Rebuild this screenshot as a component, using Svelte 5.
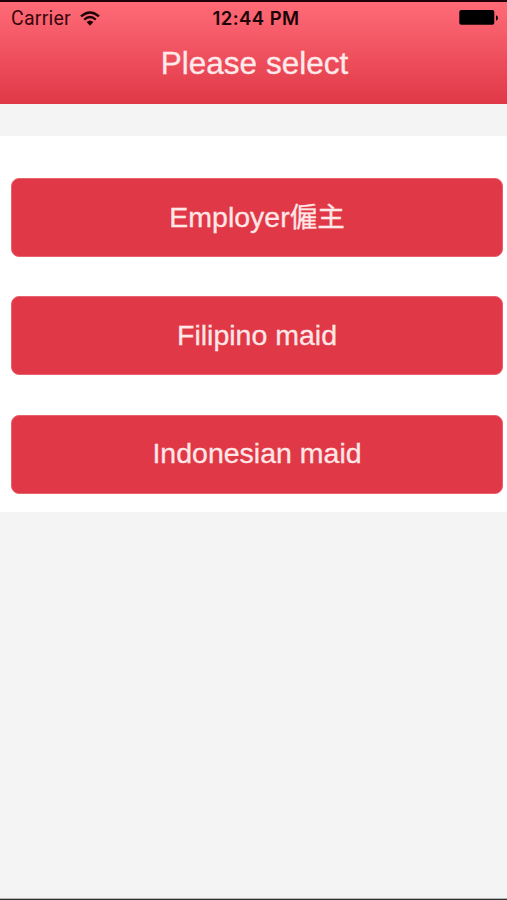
<script>
    let time = "12:44 PM";

    const roles = [
        { id: "employer", name: "Employer", native: "僱主" },
        { id: "filipino", name: "Filipino maid" },
        { id: "indonesian", name: "Indonesian maid" },
    ];
</script>

<div class="screen">
    <header class="header">
        <div class="status-bar">
            <div class="carrier">
                <span class="carrier-name">Carrier</span>
                <svg class="wifi" viewBox="0 0 20 15" width="20" height="15">
                    <path d="M1 5.4 Q10 -2.6 19 5.4" />
                    <path d="M4.2 8.6 Q10 3.4 15.8 8.6" />
                    <path class="dot" d="M6.6 11 Q10 8 13.4 11 L10 14.7 Z" />
                </svg>
            </div>
            <span class="time">{time}</span>
            <svg class="battery" viewBox="0 0 40 16" width="40" height="16">
                <rect x="0.3" y="0" width="35" height="14.8" rx="2" />
                <path d="M37 5.2 Q39 6 39 8 Q39 10 37 10.8 Z" />
            </svg>
        </div>
        <h1 class="title">Please select</h1>
    </header>

    <main class="roles">
        {#each roles as role (role.id)}
            <button class="role-button" type="button">
                {role.name}{#if role.native}<span class="native" lang="zh-Hant">{role.native}</span>{/if}
            </button>
        {/each}
    </main>
</div>

<style>
    :global(body) {
        margin: 0;
        background-color: #f4f4f4;
    }

    .screen {
        box-sizing: border-box;
        height: 900px;
        border-top: 2px solid #210009;
        border-bottom: 1px solid #303033;
        background-color: #f4f4f4;
        font-family: "Liberation Sans", "Noto Sans CJK TC", sans-serif;
        box-shadow: inset 0 -1px #b5b5b5;
        overflow: hidden;
    }

    .header {
        box-sizing: border-box;
        height: 102px;
        background: linear-gradient(#ff6b77, #e03847);
    }

    .status-bar {
        display: grid;
        grid-template-columns: 1fr auto 1fr;
        align-items: center;
        height: 32px;
        padding: 0 8px 0 11px;
    }

    .carrier {
        display: flex;
        align-items: center;
        gap: 9px;
        color: #38060c;
    }

    .carrier-name {
        font-family: Roboto, sans-serif;
        font-size: 19.5px;
        letter-spacing: 0.25px;
    }

    .wifi {
        fill: none;
        stroke: #210307;
        stroke-width: 2.4;
    }

    .wifi .dot {
        fill: #210307;
        stroke: none;
    }

    .time {
        padding-left: 2px;
        color: #1c0306;
        font-family: Inter, sans-serif;
        font-size: 18.5px;
        font-weight: 600;
        letter-spacing: 0.45px;
    }

    .battery {
        justify-self: end;
        fill: #000;
    }

    .title {
        margin: 9px 0 0;
        padding-left: 2px;
        color: #ffe9ea;
        font-size: 31.5px;
        font-weight: 400;
        line-height: 40px;
        text-align: center;
        -webkit-text-stroke: 0.3px #ffe9ea;
    }

    .roles {
        box-sizing: border-box;
        display: flex;
        flex-direction: column;
        gap: 39.4px;
        height: 376px;
        margin-top: 32px;
        padding: 42px 4px 0 11px;
        background-color: #fff;
    }

    .role-button {
        flex: none;
        height: 79px;
        padding: 0 0 2px;
        border: 1px solid #e7626d;
        border-radius: 8px;
        background-color: #e03846;
        color: #ffe6e7;
        font-family: inherit;
        font-size: 28.5px;
        line-height: 34px;
        -webkit-text-stroke: 0.3px #ffe6e7;
    }

    .native {
        font-size: 27.5px;
        line-height: 1;
    }
</style>
